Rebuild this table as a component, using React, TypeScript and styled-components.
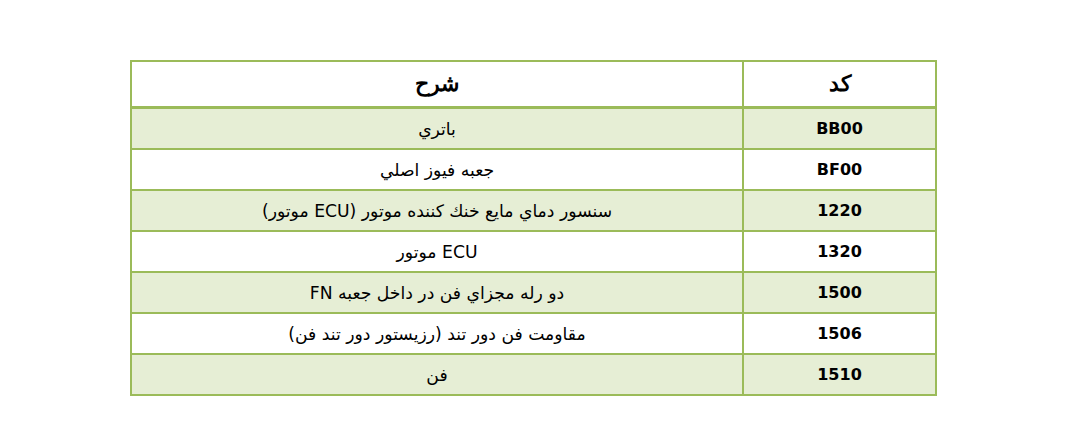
import React from 'react';
import styled, { createGlobalStyle } from 'styled-components';

const GlobalStyle = createGlobalStyle`
  html, body {
    margin: 0;
    padding: 0;
    background: #ffffff;
  }
`;

const green = '#9bbb59';

const Page = styled.div`
  padding: 60px 0 0 130px;
`;

const Table = styled.table`
  direction: rtl;
  width: 807px;
  table-layout: fixed;
  border-collapse: collapse;
  border: 2px solid ${green};
  font-family: 'DejaVu Sans', Tahoma, sans-serif;
  color: #000000;
`;

const HeadCell = styled.th<{ $code?: boolean }>`
  height: 44px;
  padding: 0;
  width: ${p => (p.$code ? '191px' : 'auto')};
  border: 2px solid ${green};
  border-bottom-width: 3px;
  font-family: 'Liberation Sans', Arial, sans-serif;
  font-size: 22px;
  font-weight: bold;
  text-align: center;
  vertical-align: middle;
`;

const Row = styled.tr<{ $shaded: boolean }>`
  background: ${p => (p.$shaded ? '#e6eed5' : '#ffffff')};
`;

const Cell = styled.td<{ $code?: boolean }>`
  height: 39px;
  padding: 0;
  border: 2px solid ${green};
  font-size: ${p => (p.$code ? '16px' : '17.2px')};
  font-weight: ${p => (p.$code ? 'bold' : 'normal')};
  text-align: center;
  vertical-align: middle;
  white-space: nowrap;
`;

const rows: [string, string][] = [
  ['BB00', 'باتري'],
  ['BF00', 'جعبه فيوز اصلي'],
  ['1220', 'سنسور دماي مايع خنك كننده موتور (ECU موتور)'],
  ['1320', 'ECU موتور'],
  ['1500', 'دو رله مجزاي فن در داخل جعبه FN'],
  ['1506', 'مقاومت فن دور تند (رزيستور دور تند فن)'],
  ['1510', 'فن'],
];

export default function App() {
  return (
    <>
      <GlobalStyle />
      <Page>
        <Table>
          <thead>
            <tr>
              <HeadCell $code>كد</HeadCell>
              <HeadCell>شرح</HeadCell>
            </tr>
          </thead>
          <tbody>
            {rows.map(([code, text], i) => (
              <Row key={code} $shaded={i % 2 === 0}>
                <Cell $code>
                  <bdi dir="ltr">{code}</bdi>
                </Cell>
                <Cell>{text}</Cell>
              </Row>
            ))}
          </tbody>
        </Table>
      </Page>
    </>
  );
}
